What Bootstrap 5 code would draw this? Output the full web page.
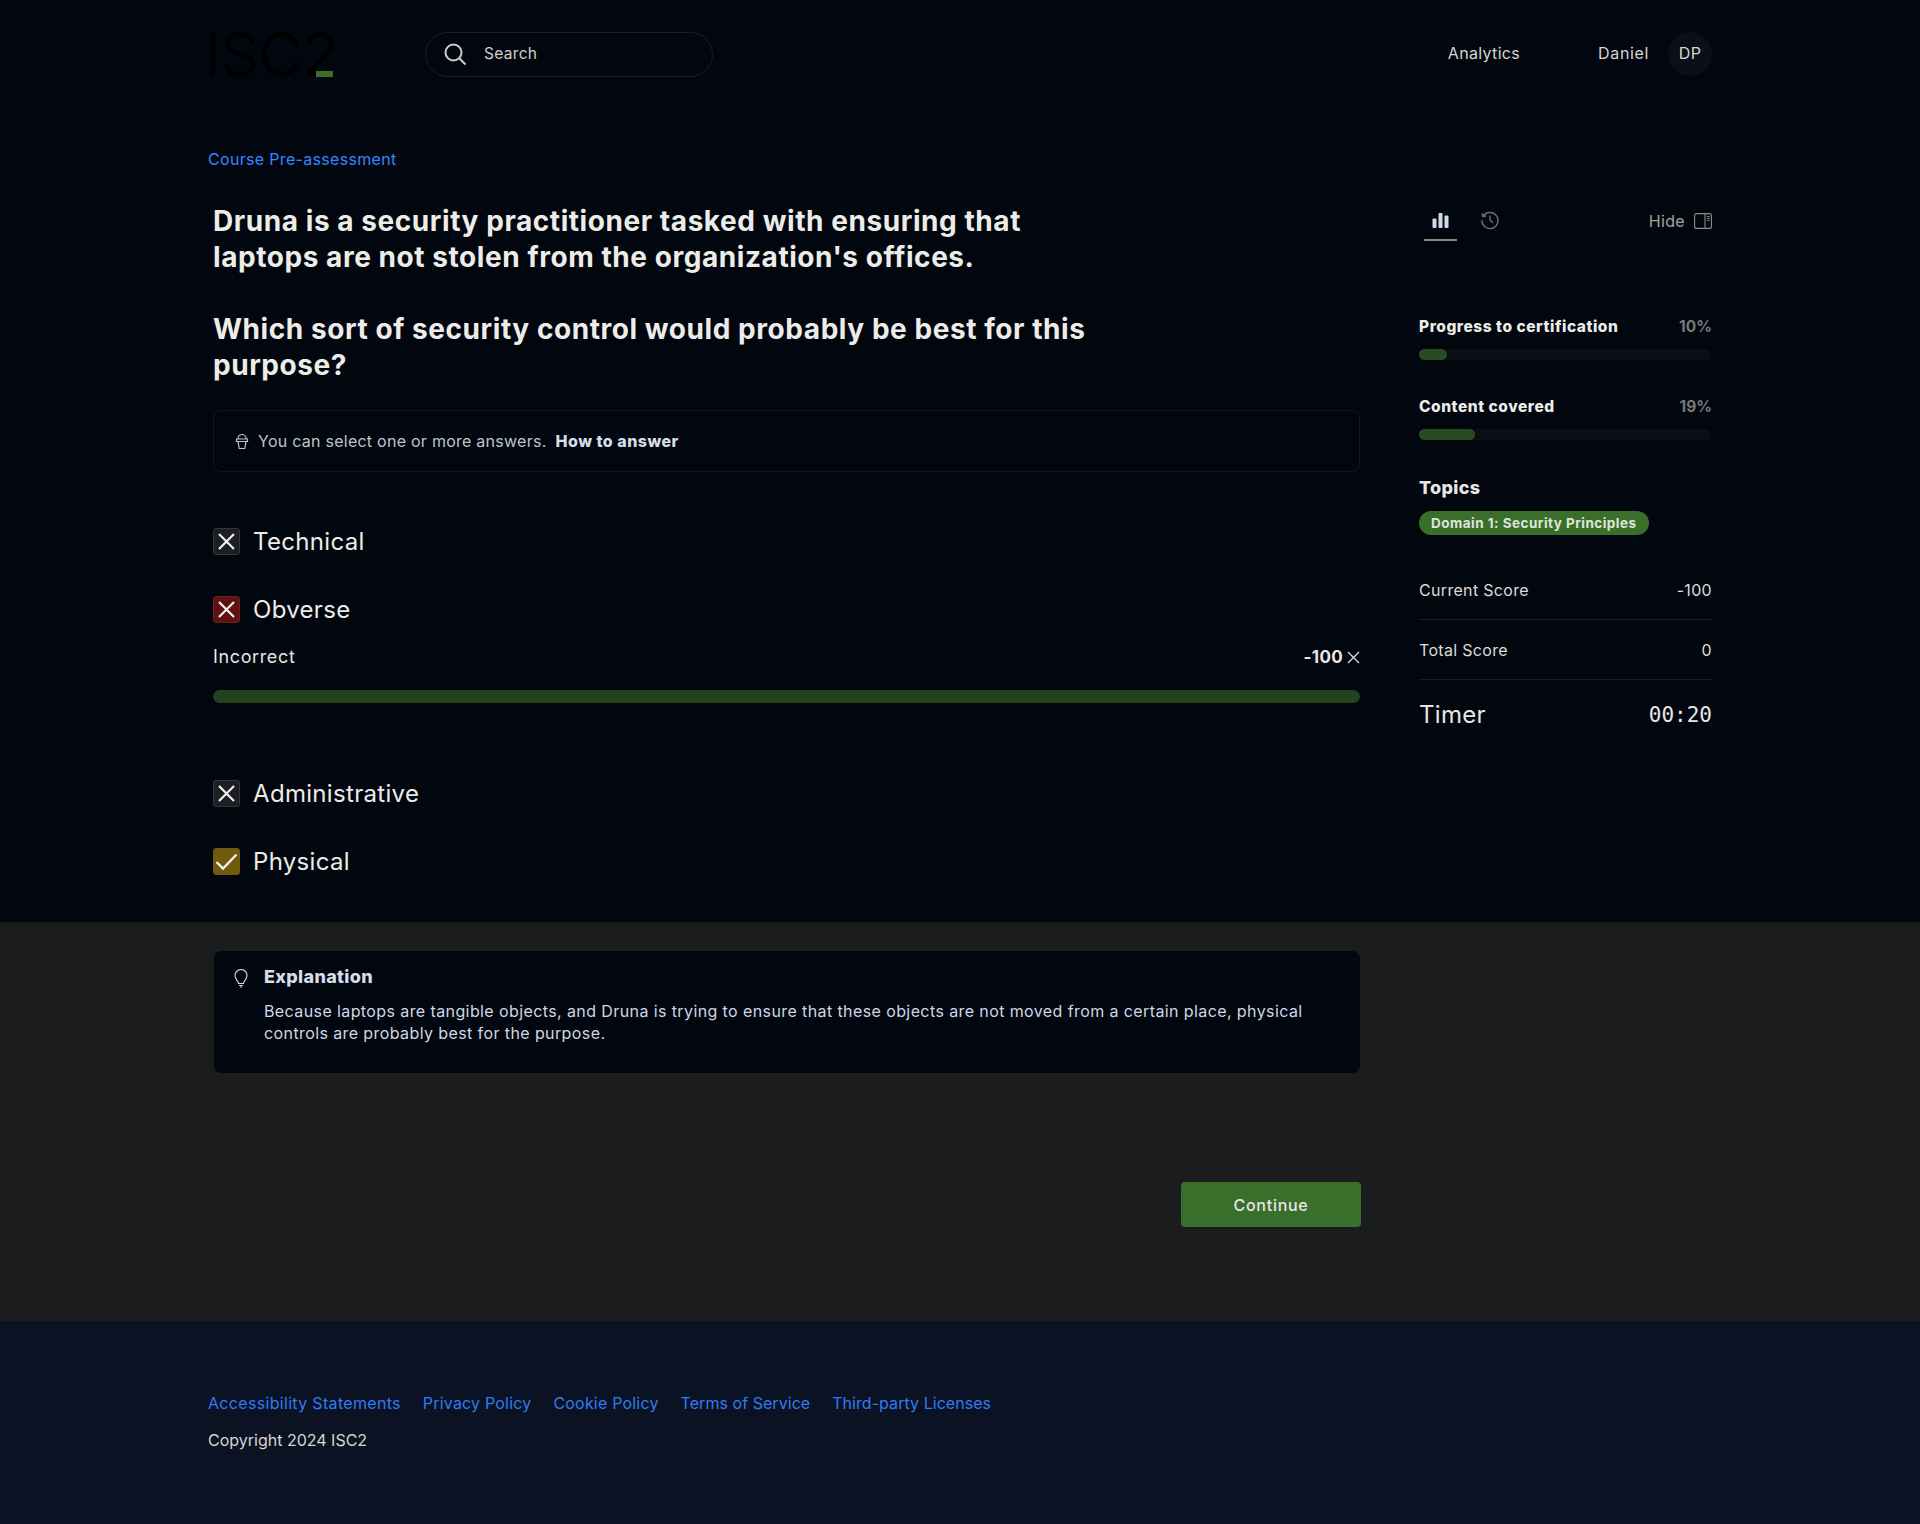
<!DOCTYPE html>
<html lang="en">
<head>
<meta charset="UTF-8">
<meta name="viewport" content="width=device-width, initial-scale=1.0">
<title>Course Pre-assessment</title>
<link href="https://cdn.jsdelivr.net/npm/bootstrap@5.3.0/dist/css/bootstrap.min.css" rel="stylesheet">
<style>
body { background: #01060f; color: #e8e6e3; font-family: Inter, "Open Sans", sans-serif; font-size: 16px; letter-spacing: .02em; }
a { text-decoration: none; }
.wrap { width: 1504px; margin-left: 208px; }
.top-bar { height: 108px; border-bottom: 1px solid #060a13; }
.logo-box { width: 217px; height: 44px; position: relative; }
.logo-text { font-size: 60px; line-height: 44px; font-weight: 300; color: #000; letter-spacing: 0; margin-left: -3px; }
.logo-dash { position: absolute; left: 108px; top: 39px; width: 17px; height: 6px; background: #3a6f2b; }
.search-pill { width: 288px; height: 45px; margin-top: 1px; border: 1px solid #1a1d24; border-radius: 23px; padding-left: 17px; color: #d2cfca; font-size: 15.5px; gap: 16px; }
.top-link { color: #d8d5d0; font-size: 16px; padding-bottom: 2px; }
.daniel-name { margin-left: 78px; letter-spacing: .04em; }
.avatar { width: 44px; height: 44px; border-radius: 50%; background: #0b0f17; color: #d8d5d0; margin-left: 19px; padding-bottom: 2px; }
.crumb { color: #3189ff; font-size: 16px; line-height: 20px; margin-top: 41px; }
.main-row { margin-top: 34px; padding-left: 5px; }
.left-col { width: 1147px; padding-bottom: 47px; }
.side-col { width: 293px; margin-left: 59px; }
.q-text { font-size: 28px; line-height: 36px; font-weight: 700; color: #eeece8; width: 900px; margin-bottom: 36px; letter-spacing: .02em; }
.hint-box { height: 62px; border: 1px solid #141821; border-radius: 8px; padding-left: 21px; font-size: 16px; color: #bfc4cb; margin-top: -9px; letter-spacing: .016em; }
.hint-icon { margin-right: 9px; }
.hint-box b { color: #d5dde8; margin-left: 9px; font-weight: 800; letter-spacing: .03em; }
.opt { height: 27px; font-size: 24px; line-height: 27px; gap: 13px; color: #eeece8; }
.mt-ans { margin-top: 56px; }
.mt-gap { margin-top: 41px; }
.box-mark { width: 27px; height: 27px; border-radius: 3px; background: #1c1e22; border: 1px solid #33363b; }
.box-wrong { background: #5e1212; border-color: #6e1c1c; }
.box-right { background: #6f5a0e; border-color: #6f5a0e; }
.verdict { font-size: 18px; line-height: 24px; margin-top: 22px; letter-spacing: .035em; }
.verdict b { font-size: 17px; letter-spacing: .02em; }
.wide-bar { height: 13px; background: #25421f; border-radius: 7px; margin-top: 21px; margin-bottom: 77px; }
.side-tabs { height: 44px; }
.tab-on { width: 33px; height: 38px; padding-top: 9px; border-bottom: 2px solid #8a8276; margin-left: 5px; }
.tab-off { margin-left: 23px; padding-top: 3px; }
.hide-link { color: #a5a29c; font-size: 16px; line-height: 24px; gap: 9px; padding-top: 6px; }
.stat-head { font-size: 15.5px; line-height: 20px; font-weight: 800; color: #eeece8; letter-spacing: .035em; }
.stat-first { margin-top: 70px; }
.stat-next { margin-top: 37px; }
.stat-pct { color: #77787a; font-weight: 700; letter-spacing: 0; }
.thin-bar { height: 11px; background: #0a0e15; border-radius: 6px; margin-top: 12px; }
.thin-fill { height: 100%; background: #2a4a22; border-radius: 6px; }
.topic-title { font-size: 18px; font-weight: 800; line-height: 24px; margin-top: 36px; }
.topic-pill { background: #3a6f2b; color: #dfe5da; font-size: 13.5px; font-weight: 700; height: 24px; border-radius: 12px; padding: 0 12px; margin-top: 11px; letter-spacing: .035em; }
.score-row { font-size: 16px; line-height: 20px; padding: 20px 0 19px; border-bottom: 1px solid #161a22; color: #dedcd7; }
.score-first { margin-top: 25px; }
.timer-row { font-size: 24px; line-height: 30px; padding-top: 20px; }
.timer-val { font-family: "DejaVu Sans Mono", monospace; font-size: 21px; letter-spacing: 0; }
.grey-band { background: #1a1c1e; height: 399px; padding-top: 29px; }
.expl-card { width: 1146px; margin-left: 6px; height: 122px; background: #01060f; border-radius: 8px; padding: 14px 20px; gap: 16px; }
.expl-title { font-size: 18px; line-height: 24px; font-weight: 800; color: #d5dde8; }
.expl-text { font-size: 16px; line-height: 22px; color: #cfd8e4; margin-top: 11px; width: 1085px; letter-spacing: .025em; }
.go-btn { width: 180px; height: 45px; background: #3a6f2b; border: 0; border-radius: 4px; color: #e8e6e3; font-size: 16px; font-weight: 500; letter-spacing: .045em; margin-left: 973px; margin-top: 109px; display: block; }
.go-btn:hover { background: #3a6f2b; color: #e8e6e3; }
.foot { background: #0b1224; height: 203px; padding-top: 70px; }
.foot a { color: #2f7df0; font-size: 16px; line-height: 22px; margin-right: 22px; letter-spacing: .012em; }
.foot a.foot-wide { letter-spacing: .02em; }
.foot a.foot-tight { letter-spacing: .003em; }
.foot-copy { margin-top: 14px; line-height: 22px; color: #d8d5d0; letter-spacing: 0; }
</style>
</head>
<body>

<!-- header -->
<div class="top-bar">
  <div class="wrap d-flex align-items-center justify-content-between h-100">
    <div class="d-flex align-items-center">
      <div class="logo-box">
        <span class="logo-text">ISC2</span>
        <span class="logo-dash"></span>
      </div>
      <div class="search-pill d-flex align-items-center">
        <svg width="25" height="25" viewBox="0 0 25 25" fill="none" stroke="#d2cfca" stroke-width="2"><circle cx="10.5" cy="10.5" r="8"/><path d="M16.500 16.500l6 6"/></svg>
        <span>Search</span>
      </div>
    </div>
    <div class="d-flex align-items-center">
      <a class="top-link" href="#">Analytics</a>
      <span class="top-link daniel-name">Daniel</span>
      <span class="avatar d-flex align-items-center justify-content-center">DP</span>
    </div>
  </div>
</div>

<div class="wrap">
  <div class="crumb"><a href="#" class="crumb">Course Pre-assessment</a></div>

  <div class="main-row d-flex">
    <div class="left-col">
      <div class="q-text">Druna is a security practitioner tasked with ensuring that laptops are not stolen from the organization's offices.</div>
      <div class="q-text">Which sort of security control would probably be best for this purpose?</div>

      <div class="hint-box d-flex align-items-center">
        <svg width="14" height="18" viewBox="0 0 14 18" fill="none" stroke="#bfc4cb" stroke-width="1.2" class="hint-icon"><path d="M3 6.500a4 4 0 0 1 8 0M1.500 7h11v2.500h-11zM3 9.500l1.200 7h5.600l1.200-7"/></svg>
        <span>You can select one or more answers.</span><b>How to answer</b>
      </div>

      <div class="opt d-flex align-items-center mt-ans">
        <span class="box-mark d-flex align-items-center justify-content-center"><svg width="19" height="19" viewBox="0 0 19 19" stroke="#f1f1f1" stroke-width="2.2"><path d="M2 2l15 15M17 2L2 17"/></svg></span>
        <span>Technical</span>
      </div>
      <div class="opt d-flex align-items-center mt-gap">
        <span class="box-mark box-wrong d-flex align-items-center justify-content-center"><svg width="19" height="19" viewBox="0 0 19 19" stroke="#f1f1f1" stroke-width="2.2"><path d="M2 2l15 15M17 2L2 17"/></svg></span>
        <span>Obverse</span>
      </div>
      <div class="verdict d-flex justify-content-between align-items-center">
        <span>Incorrect</span>
        <span class="d-flex align-items-center gap-1"><b>-100</b><svg width="13" height="13" viewBox="0 0 13 13" stroke="#d8d8d8" stroke-width="1.4"><path d="M1 1l11 11M12 1L1 12"/></svg></span>
      </div>
      <div class="wide-bar"></div>
      <div class="opt d-flex align-items-center">
        <span class="box-mark d-flex align-items-center justify-content-center"><svg width="19" height="19" viewBox="0 0 19 19" stroke="#f1f1f1" stroke-width="2.2"><path d="M2 2l15 15M17 2L2 17"/></svg></span>
        <span>Administrative</span>
      </div>
      <div class="opt d-flex align-items-center mt-gap">
        <span class="box-mark box-right d-flex align-items-center justify-content-center"><svg width="23" height="19" viewBox="0 0 23 19" fill="none" stroke="#f1f1f1" stroke-width="2.4"><path d="M1.500 10l6.500 6.500L21.500 2.500"/></svg></span>
        <span>Physical</span>
      </div>
    </div>

    <div class="side-col">
      <div class="side-tabs d-flex justify-content-between align-items-start">
        <div class="d-flex">
          <div class="tab-on d-flex justify-content-center">
            <svg width="17" height="17" viewBox="0 0 17 17" fill="#cdd9e6"><rect x="0.500" y="6.500" width="4" height="9.500" rx="1"/><rect x="6.500" y="1" width="4" height="15" rx="1"/><rect x="12.500" y="3.500" width="4" height="12.500" rx="1"/></svg>
          </div>
          <div class="tab-off">
            <svg width="20" height="20" viewBox="0 0 20 20" fill="none" stroke="#6f7072" stroke-width="1.4"><path d="M3.200 6.300A8 8 0 1 1 2 10M2 3.200l1 3.400 3.400-.7M10 5.500V10l3 3"/></svg>
          </div>
        </div>
        <div class="hide-link d-flex align-items-center">
          <span>Hide</span>
          <svg width="18" height="16" viewBox="0 0 18 16" fill="none" stroke="#8d8c88" stroke-width="1.1"><rect x=".6" y=".6" width="16.800" height="14.800" rx="2"/><path d="M11 .6v14.800M13 3.500h2.600M13 5.500h2.600M13 7.500h2.600"/></svg>
        </div>
      </div>

      <div class="stat-head d-flex justify-content-between stat-first"><span>Progress to certification</span><span class="stat-pct">10%</span></div>
      <div class="thin-bar"><div class="thin-fill" style="width: 9.5%"></div></div>

      <div class="stat-head d-flex justify-content-between stat-next"><span>Content covered</span><span class="stat-pct">19%</span></div>
      <div class="thin-bar"><div class="thin-fill" style="width: 19%"></div></div>

      <div class="topic-title">Topics</div>
      <span class="topic-pill d-inline-flex align-items-center">Domain 1: Security Principles</span>

      <div class="score-row d-flex justify-content-between score-first"><span>Current Score</span><span>-100</span></div>
      <div class="score-row d-flex justify-content-between"><span>Total Score</span><span>0</span></div>
      <div class="timer-row d-flex justify-content-between align-items-center"><span>Timer</span><span class="timer-val">00:20</span></div>
    </div>
  </div>
</div>

<!-- explanation band -->
<div class="grey-band">
  <div class="wrap">
    <div class="expl-card d-flex">
      <svg width="14" height="19" viewBox="0 0 14 19" fill="none" stroke="#d8d8d8" stroke-width="1.1" class="flex-shrink-0 mt-1"><path d="M4.500 14.500C4 11.500 1 10 1 6.500a6 6 0 0 1 12 0c0 3.500-3 5-3.500 8zM5 16.500h4M6 18h2"/></svg>
      <div>
        <div class="expl-title">Explanation</div>
        <div class="expl-text">Because laptops are tangible objects, and Druna is trying to ensure that these objects are not moved from a certain place, physical controls are probably best for the purpose.</div>
      </div>
    </div>
    <button class="btn go-btn" type="button">Continue</button>
  </div>
</div>

<!-- footer -->
<div class="foot">
  <div class="wrap">
    <div><a href="#" class="foot-wide">Accessibility Statements</a><a href="#">Privacy Policy</a><a href="#">Cookie Policy</a><a href="#" class="foot-tight">Terms of Service</a><a href="#" class="foot-tight">Third-party Licenses</a></div>
    <div class="foot-copy">Copyright 2024 ISC2</div>
  </div>
</div>

<script src="https://cdn.jsdelivr.net/npm/bootstrap@5.3.0/dist/js/bootstrap.bundle.min.js"></script>
</body>
</html>
